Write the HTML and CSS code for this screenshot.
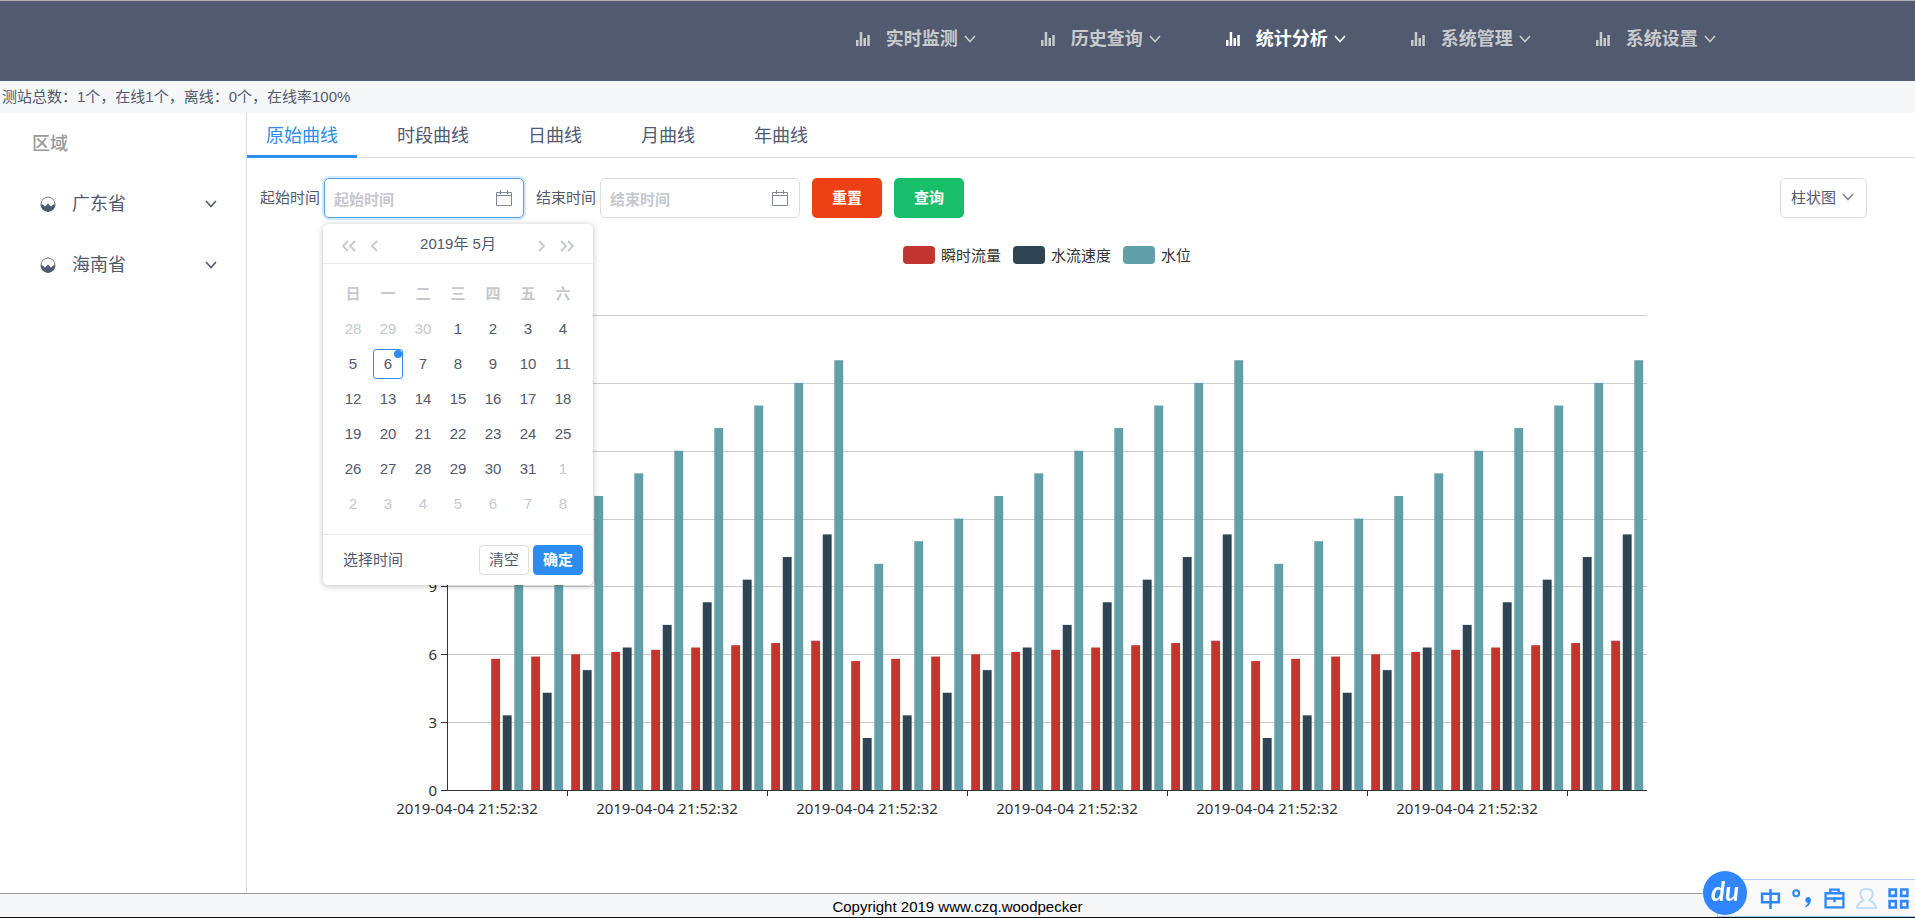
FILE: index.html
```html
<!DOCTYPE html>
<html lang="zh-CN">
<head>
<meta charset="utf-8">
<title>统计分析</title>
<link rel="stylesheet" href="styles.css">
</head>
<body>
<svg class="defs" aria-hidden="true">
  <symbol id="bars" viewBox="0 0 14 14"><path fill="currentColor" d="M0 8h2.500v6H0zM3.700 0h2.500v14H3.700zM7.500 6H10v8H7.500zM11.300 3h2.500v11h-2.500z"/></symbol>
  <symbol id="down" viewBox="0 0 12 12"><path fill="none" stroke="currentColor" stroke-width="1.600" d="M1 3l5 5.500L11 3"/></symbol>
  <symbol id="left" viewBox="0 0 8 12"><path fill="none" stroke="currentColor" stroke-width="1.800" d="M7 1L2 6l5 5"/></symbol>
  <symbol id="right" viewBox="0 0 8 12"><path fill="none" stroke="currentColor" stroke-width="1.800" d="M1 1l5 5-5 5"/></symbol>
  <symbol id="left2" viewBox="0 0 15 12"><path fill="none" stroke="currentColor" stroke-width="1.800" d="M7 1L2 6l5 5M14 1L9 6l5 5"/></symbol>
  <symbol id="right2" viewBox="0 0 15 12"><path fill="none" stroke="currentColor" stroke-width="1.800" d="M1 1l5 5-5 5M8 1l5 5-5 5"/></symbol>
  <symbol id="calendar" viewBox="0 0 16 16"><path fill="none" stroke="currentColor" d="M.5 2.500h15v13H.5zM.5 5.500h15M4.500 0v4M11.500 0v4"/></symbol>
  <symbol id="region" viewBox="0 0 16 16"><circle cx="8" cy="8" r="7" fill="none" stroke="currentColor" stroke-width=".8"/><path fill="currentColor" d="M.6 8.500h2L5 10.500l1.500-1.200L8 7.200l1.500 2.100L11 10.500l2.400-2h2a7.400 7.400 0 0 1-14.800 0z"/></symbol>
</svg>

<header class="header">
  <nav class="menu">
    <a class="menu-item" href="#"><svg class="icon-bars"><use href="#bars"/></svg>实时监测<svg class="icon-down"><use href="#down"/></svg></a>
    <a class="menu-item" href="#"><svg class="icon-bars"><use href="#bars"/></svg>历史查询<svg class="icon-down"><use href="#down"/></svg></a>
    <a class="menu-item active" href="#"><svg class="icon-bars"><use href="#bars"/></svg>统计分析<svg class="icon-down"><use href="#down"/></svg></a>
    <a class="menu-item" href="#"><svg class="icon-bars"><use href="#bars"/></svg>系统管理<svg class="icon-down"><use href="#down"/></svg></a>
    <a class="menu-item" href="#"><svg class="icon-bars"><use href="#bars"/></svg>系统设置<svg class="icon-down"><use href="#down"/></svg></a>
  </nav>
</header>
<div class="status">测站总数：1个，在线1个，离线：0个，在线率100%</div>

<div class="body">
  <aside class="sidebar">
    <h2 class="side-title">区域</h2>
    <button class="side-item" type="button"><svg class="icon-region"><use href="#region"/></svg><span class="side-name">广东省</span><svg class="icon-down"><use href="#down"/></svg></button>
    <button class="side-item" type="button"><svg class="icon-region"><use href="#region"/></svg><span class="side-name">海南省</span><svg class="icon-down"><use href="#down"/></svg></button>
  </aside>
  <main class="content">
    <div class="tabs" role="tablist">
      <button class="tab active" type="button" role="tab" aria-selected="true">原始曲线</button>
      <button class="tab" type="button" role="tab">时段曲线</button>
      <button class="tab" type="button" role="tab">日曲线</button>
      <button class="tab" type="button" role="tab">月曲线</button>
      <button class="tab" type="button" role="tab">年曲线</button>
    </div>
    <form class="toolbar">
      <label class="field-label" for="start">起始时间</label>
      <div class="picker">
        <input class="input focused" id="start" type="text" placeholder="起始时间">
        <svg class="icon-calendar"><use href="#calendar"/></svg>
        <div class="popup">
          <div class="popup-head">
            <button class="step" type="button" aria-label="上一年"><svg class="icon-double"><use href="#left2"/></svg></button>
            <button class="step" type="button" aria-label="上一月"><svg class="icon-single"><use href="#left"/></svg></button>
            <span class="popup-title">2019年 5月</span>
            <button class="step" type="button" aria-label="下一月"><svg class="icon-single"><use href="#right"/></svg></button>
            <button class="step" type="button" aria-label="下一年"><svg class="icon-double"><use href="#right2"/></svg></button>
          </div>
          <table class="days">
            <thead><tr><th>日</th><th>一</th><th>二</th><th>三</th><th>四</th><th>五</th><th>六</th></tr></thead>
            <tbody>
              <tr><td class="other">28</td><td class="other">29</td><td class="other">30</td><td>1</td><td>2</td><td>3</td><td>4</td></tr>
              <tr><td>5</td><td><span class="today">6</span></td><td>7</td><td>8</td><td>9</td><td>10</td><td>11</td></tr>
              <tr><td>12</td><td>13</td><td>14</td><td>15</td><td>16</td><td>17</td><td>18</td></tr>
              <tr><td>19</td><td>20</td><td>21</td><td>22</td><td>23</td><td>24</td><td>25</td></tr>
              <tr><td>26</td><td>27</td><td>28</td><td>29</td><td>30</td><td>31</td><td class="other">1</td></tr>
              <tr><td class="other">2</td><td class="other">3</td><td class="other">4</td><td class="other">5</td><td class="other">6</td><td class="other">7</td><td class="other">8</td></tr>
            </tbody>
          </table>
          <div class="popup-foot">
            <button class="pick-time" type="button">选择时间</button>
            <button class="small" type="button">清空</button>
            <button class="small primary" type="button">确定</button>
          </div>
        </div>
      </div>
      <label class="field-label second" for="end">结束时间</label>
      <div class="picker">
        <input class="input" id="end" type="text" placeholder="结束时间">
        <svg class="icon-calendar"><use href="#calendar"/></svg>
      </div>
      <button class="button reset" type="reset">重置</button>
      <button class="button query" type="button">查询</button>
      <div class="type">
        <select class="type-select" aria-label="图表类型"><option>柱状图</option><option>折线图</option></select>
        <svg class="icon-down type-arrow"><use href="#down"/></svg>
      </div>
    </form>
    <svg class="chart" id="chart" viewBox="0 0 1600 640" role="img" aria-label="瞬时流量、水流速度、水位柱状图"></svg>
  </main>
</div>
<footer class="footer">Copyright 2019 www.czq.woodpecker</footer>

<div class="ime">
  <span class="ime-logo">du</span>
  <div class="ime-bar">
    <svg class="ime-icon" viewBox="0 0 20 20"><path fill="none" stroke="currentColor" stroke-width="2.400" d="M2 5.500h16v8H2zM10 1v19"/></svg>
    <svg class="ime-icon" viewBox="0 0 20 20"><circle cx="4" cy="5" r="2.800" fill="none" stroke="currentColor" stroke-width="2"/><path fill="currentColor" d="M15 8.500a3 3 0 0 1 3 3c0 3-2 6-5 7l-.5-1.200c1.500-.8 2.400-1.800 2.500-2.900a3 3 0 0 1 0-5.900z"/></svg>
    <svg class="ime-icon" viewBox="0 0 20 20"><path fill="none" stroke="currentColor" stroke-width="2.200" d="M1.500 5h17v13.500h-17zM6 5V1.500h8V5M1.500 10h17M10 8.500v5"/></svg>
    <svg class="ime-icon faint" viewBox="0 0 20 20"><path fill="none" stroke="currentColor" stroke-width="2" d="M7.500 12C1 5 4.500 1 10 1s9 4 2.500 11c3 1 6 2.500 6.500 7H1c.5-4.500 3.500-6 6.500-7z"/></svg>
    <svg class="ime-icon" viewBox="0 0 20 20"><path fill="none" stroke="currentColor" stroke-width="2.400" d="M1.500 1.500h6v6h-6zM12.500 1.500h6v6h-6zM1.500 12.500h6v6h-6zM12.500 12.500h6v6h-6z"/></svg>
  </div>
</div>
<script src="chart.js"></script>
</body>
</html>
```
FILE: chart.js
```js
const chart = document.getElementById('chart');
const LEFT = 200, BOTTOM = 572, WIDTH = 1200, HEIGHT = 475, MAX = 21;
const COUNT = 30, STEP = WIDTH / COUNT;
const SERIES = [
  { name: '瞬时流量', color: '#c23531', base: 5.7, rise: 0.1, legend: 656 },
  { name: '水流速度', color: '#2f4554', base: 2.3, rise: 1, legend: 766 },
  { name: '水位', color: '#61a0a8', base: 10, rise: 1, legend: 876 }
];

function add(tag, attrs, text) {
  const node = document.createElementNS('http://www.w3.org/2000/svg', tag);
  for (const key in attrs) node.setAttribute(key, attrs[key]);
  if (text !== undefined) node.textContent = text;
  chart.appendChild(node);
}

for (const s of SERIES) {
  add('rect', { x: s.legend, y: 28, width: 32, height: 18, rx: 4, fill: s.color });
  add('text', { x: s.legend + 38, y: 43, class: 'chart-text' }, s.name);
}

for (let v = 0; v <= MAX; v += 3) {
  const y = Math.round(BOTTOM - v * HEIGHT / MAX) + 0.5;
  if (v) add('line', { x1: LEFT, x2: LEFT + WIDTH, y1: y, y2: y, class: 'grid-line' });
  add('line', { x1: LEFT - 6, x2: LEFT, y1: y, y2: y, class: 'axis-line' });
  add('text', { x: LEFT - 10, y: y + 5, class: 'chart-text end' }, v);
}

const bar = STEP * 0.8 / 3.6;
for (let i = 1; i < COUNT; i++) {
  SERIES.forEach((s, k) => {
    const h = (s.base + s.rise * (i % 10)) * HEIGHT / MAX;
    add('rect', { x: LEFT + i * STEP + 4.2 + k * bar * 1.3, y: BOTTOM - h, width: bar, height: h, fill: s.color });
  });
}

add('line', { x1: LEFT + 0.5, x2: LEFT + 0.5, y1: BOTTOM - HEIGHT, y2: BOTTOM + 1, class: 'axis-line' });
add('line', { x1: LEFT, x2: LEFT + WIDTH, y1: BOTTOM + 0.5, y2: BOTTOM + 0.5, class: 'axis-line' });
for (let i = 0; i < COUNT; i += 5) {
  const tick = LEFT + (i + 3) * STEP + 0.5;
  add('line', { x1: tick, x2: tick, y1: BOTTOM, y2: BOTTOM + 6, class: 'axis-line' });
  add('text', { x: LEFT + (i + 0.5) * STEP, y: BOTTOM + 24, class: 'chart-text middle' }, '2019-04-04 21:52:32');
}
```
FILE: styles.css
```css
* { box-sizing: border-box; }
body {
  margin: 0;
  min-height: 100vh;
  display: flex;
  flex-direction: column;
  background: #fff;
  border-top: 1px solid #b0b0b0;
  border-bottom: 1px solid #111;
  color: #515a6e;
  font: 15px/20px "Liberation Sans", "Noto Sans CJK SC", sans-serif;
}
button, input, select { font: inherit; color: inherit; }
button { cursor: pointer; padding: 0; border: 0; background: none; }
.defs { display: none; }
.header {
  height: 80px;
  background: #515a6e;
  padding-right: 9%;
}
.menu { display: flex; justify-content: flex-end; gap: 15px; padding-right: 2px; }
.menu-item {
  display: flex;
  align-items: center;
  height: 76px;
  padding: 0 25px;
  color: #c8cace;
  font-size: 18px;
  font-weight: 700;
  text-decoration: none;
}
.menu-item.active { color: #fff; }
.icon-bars { width: 14px; height: 14px; margin-right: 16px; }
.icon-down { width: 12px; height: 12px; flex: none; }
.menu-item .icon-down { margin-left: 6px; }
.status {
  background: #f5f7f9;
  padding: 6px 2px;
}
.body { flex: 1; display: flex; }
.sidebar {
  width: 247px;
  flex: none;
  border-right: 1px solid #dcdee2;
}
.side-title {
  margin: 0;
  padding: 21px 32px 19px;
  color: #999;
  font-size: 18px;
  font-weight: 500;
}
.side-item {
  display: flex;
  align-items: center;
  width: 100%;
  height: 61px;
  padding: 0 29px 0 40px;
  font-size: 18px;
}
.icon-region { width: 16px; height: 16px; margin-right: 16px; }
.side-name { flex: 1; text-align: left; }
.content { flex: 1; min-width: 0; }
.tabs {
  display: flex;
  gap: 21px;
  height: 45px;
  border-bottom: 1px solid #dcdee2;
}
.tab {
  height: 45px;
  padding: 3px 19px 0;
  border-bottom: 3px solid transparent;
  font-size: 18px;
}
.tab.active { color: #2d8cf0; border-color: #2d8cf0; }
.toolbar {
  display: flex;
  align-items: center;
  padding: 20px 48px 0 13px;
}
.field-label { margin-right: 4px; white-space: nowrap; }
.field-label.second { margin-left: 12px; }
.picker { position: relative; }
.input {
  display: block;
  width: 200px;
  height: 40px;
  padding: 2px 36px 0 9px;
  border: 1px solid #dcdee2;
  border-radius: 5px;
  background: #fff;
  outline: 0;
}
.input::placeholder { color: #c5c8ce; font-weight: 700; }
.input.focused { border-color: #57a3f3; box-shadow: 0 0 0 2px #d5e8fc; }
.icon-calendar {
  position: absolute;
  right: 12px;
  top: 12px;
  width: 16px;
  height: 16px;
  color: #808695;
}
.button {
  width: 70px;
  height: 40px;
  margin-left: 12px;
  border-radius: 5px;
  color: #fff;
  font-weight: 700;
}
.reset { background: #ed4014; }
.query { background: #19be6b; }
.type { position: relative; margin-left: auto; }
.type-select {
  display: block;
  appearance: none;
  width: 87px;
  height: 40px;
  padding: 0 10px;
  border: 1px solid #dcdee2;
  border-radius: 5px;
  background: #fff;
}
.type-arrow { position: absolute; right: 13px; top: 13px; pointer-events: none; color: #808695; }

.popup {
  position: absolute;
  z-index: 2;
  top: 46px;
  left: -1px;
  width: 270px;
  background: #fff;
  border-radius: 5px;
  box-shadow: 0 1px 6px rgba(0, 0, 0, .25);
}
.popup-head {
  display: flex;
  align-items: center;
  gap: 14px;
  height: 40px;
  padding: 0 18px;
  border-bottom: 1px solid #e8eaec;
}
.step { display: flex; padding-top: 5px; color: #c5c8ce; }
.icon-double { width: 15px; height: 12px; }
.icon-single { width: 8px; height: 12px; }
.popup-title { flex: 1; text-align: center; }
.days {
  margin: 12px auto 13px;
  border-collapse: collapse;
  table-layout: fixed;
  width: 245px;
}
.days th, .days td {
  height: 35px;
  padding: 0;
  text-align: center;
}
.days th, .days .other { color: #c5c8ce; }
.days th { font-weight: 700; }
.today {
  position: relative;
  display: block;
  width: 30px;
  margin: 0 auto;
  border: 1px solid #2d8cf0;
  border-radius: 3px;
  line-height: 28px;
}
.today::after {
  content: "";
  position: absolute;
  top: 0;
  right: 0;
  width: 8px;
  height: 8px;
  border-radius: 50%;
  background: #2d8cf0;
}
.popup-foot {
  display: flex;
  align-items: center;
  gap: 4px;
  height: 51px;
  padding: 0 10px 0 20px;
  border-top: 1px solid #e8eaec;
}
.pick-time { margin-right: auto; }
.small {
  width: 50px;
  height: 30px;
  border: 1px solid #dcdee2;
  border-radius: 4px;
}
.small.primary {
  border-color: #2d8cf0;
  background: #2d8cf0;
  color: #fff;
  font-weight: 700;
}

.chart {
  display: block;
  width: 100%;
  max-width: 1600px;
}
.chart-text {
  fill: #333;
  font: 15px "Noto Sans", "Noto Sans CJK SC", sans-serif;
}
.end { text-anchor: end; }
.middle { text-anchor: middle; }
.grid-line { stroke: #ccc; }
.axis-line { stroke: #333; }

.footer {
  border-top: 1px solid #999;
  background: #f5f7f9;
  padding: 3px 0 0;
  text-align: center;
  color: #000;
}

.ime {
  position: fixed;
  z-index: 3;
  right: 0;
  bottom: 1px;
  display: flex;
  align-items: flex-end;
  color: #2f86ff;
}
.ime-logo {
  position: relative;
  z-index: 1;
  width: 44px;
  height: 44px;
  margin-bottom: 2px;
  border-radius: 50%;
  background: #2f86ff;
  color: #fff;
  text-align: center;
  font: italic 700 26px/40px Lato, sans-serif;
}
.ime-bar {
  display: flex;
  align-items: center;
  gap: 11px;
  height: 38px;
  margin-left: -30px;
  padding: 0 6px 0 42px;
  background: #fafafa;
  border: 1px solid #a9cbff;
  border-right: 0;
}
.ime-icon { width: 21px; height: 21px; }
.faint { color: #c4dcfd; }
```
